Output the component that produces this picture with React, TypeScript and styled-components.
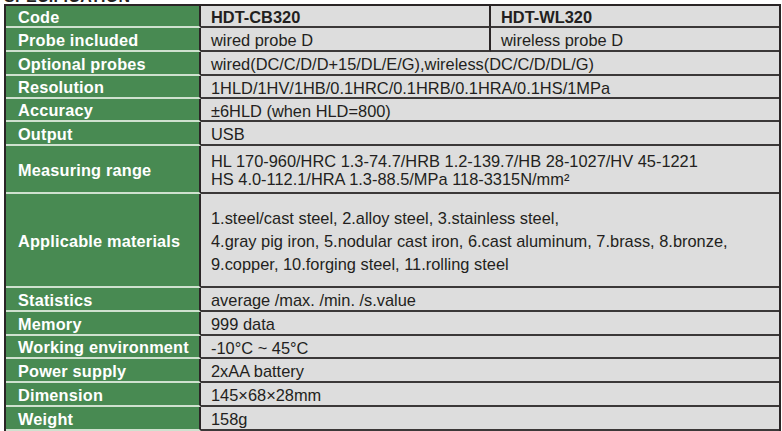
import { createGlobalStyle } from "styled-components";
import styled from "styled-components";

const GlobalStyle = createGlobalStyle`
  html, body {
    margin: 0;
    padding: 0;
    background: #ffffff;
    overflow: hidden;
  }

  body {
    font-family: "Liberation Sans", Arial, sans-serif;
  }
`;

const Page = styled.div`
  display: flex;
  flex-direction: column;

  width: 782px;
  height: 431px;
  padding-left: 4px;
  box-sizing: border-box;
`;

// only the bottom of the heading is in the shot
const TitleBar = styled.div`
  display: flex;
  align-items: flex-end;

  height: 5px;
  padding-bottom: 1px;
  box-sizing: border-box;
  overflow: hidden;
`;

const Title = styled.span`
  font-size: 16px;
  font-weight: 700;
  line-height: 12px;
  color: #231f20;
  letter-spacing: 0.3px;
  white-space: nowrap;
`;

const Table = styled.div`
  display: flex;
  flex-direction: column;

  width: 777px;
  border: 2px solid #2a2526;
  border-bottom: none;
  box-sizing: border-box;
`;

const Row = styled.div<{ $height: number }>`
  display: flex;

  flex: none;
  height: ${(p) => p.$height}px;
`;

const Label = styled.div`
  display: flex;
  align-items: center;

  flex: none;
  width: 195px;
  padding: 2px 0 0 12px;
  box-sizing: border-box;

  background: #488a52;
  border-bottom: 2px solid #cfe1cf;
  border-right: 2px solid #2a2526;

  color: #ffffff;
  font-size: 16.3px;
  font-weight: 700;
  letter-spacing: 0.2px;
  white-space: nowrap;
`;

const Value = styled.div<{ $bold?: boolean; $split?: boolean; $lineHeight?: number }>`
  display: flex;
  flex-direction: column;
  justify-content: center;

  flex: ${(p) => (p.$split ? "none" : "1")};
  width: ${(p) => (p.$split ? "290px" : "auto")};
  padding: 2px 0 0 10px;
  box-sizing: border-box;

  background: #dddddd;
  border-bottom: 2px solid #3b3838;
  border-right: ${(p) => (p.$split ? "2px solid #2a2526" : "none")};

  color: #231f20;
  font-size: 16.4px;
  font-weight: ${(p) => (p.$bold ? 700 : 400)};
  line-height: ${(p) => p.$lineHeight ?? 18}px;
  white-space: nowrap;
`;

interface Spec {
  label: string;
  height: number;
  lines: string[];
  lineHeight?: number;
}

const specs: Spec[] = [
  { label: "Optional probes", height: 24, lines: ["wired(DC/C/D/D+15/DL/E/G),wireless(DC/C/D/DL/G)"] },
  { label: "Resolution", height: 23, lines: ["1HLD/1HV/1HB/0.1HRC/0.1HRB/0.1HRA/0.1HS/1MPa"] },
  { label: "Accuracy", height: 23, lines: ["±6HLD (when HLD=800)"] },
  { label: "Output", height: 24, lines: ["USB"] },
  {
    label: "Measuring range",
    height: 48,
    lines: [
      "HL 170-960/HRC 1.3-74.7/HRB 1.2-139.7/HB 28-1027/HV 45-1221",
      "HS 4.0-112.1/HRA 1.3-88.5/MPa 118-3315N/mm²",
    ],
  },
  {
    label: "Applicable materials",
    height: 94,
    lineHeight: 23,
    lines: [
      "1.steel/cast steel, 2.alloy steel, 3.stainless steel,",
      "4.gray pig iron, 5.nodular cast iron, 6.cast aluminum, 7.brass, 8.bronze,",
      "9.copper, 10.forging steel, 11.rolling steel",
    ],
  },
  { label: "Statistics", height: 24, lines: ["average /max. /min. /s.value"] },
  { label: "Memory", height: 24, lines: ["999 data"] },
  { label: "Working environment", height: 23, lines: ["-10°C ~ 45°C"] },
  { label: "Power supply", height: 24, lines: ["2xAA battery"] },
  { label: "Dimension", height: 24, lines: ["145×68×28mm"] },
  { label: "Weight", height: 24, lines: ["158g"] },
];

function App() {
  return (
    <>
      <GlobalStyle />
      <Page>
        <TitleBar>
          <Title>SPECIFICATION</Title>
        </TitleBar>
        <Table>
          <Row $height={22}>
            <Label>Code</Label>
            <Value $bold $split>HDT-CB320</Value>
            <Value $bold>HDT-WL320</Value>
          </Row>
          <Row $height={24}>
            <Label>Probe included</Label>
            <Value $split>wired probe D</Value>
            <Value>wireless probe D</Value>
          </Row>
          {specs.map((spec) => (
            <Row key={spec.label} $height={spec.height}>
              <Label>{spec.label}</Label>
              <Value $lineHeight={spec.lineHeight}>
                {spec.lines.map((line) => (
                  <span key={line}>{line}</span>
                ))}
              </Value>
            </Row>
          ))}
        </Table>
      </Page>
    </>
  );
}

export default App;
